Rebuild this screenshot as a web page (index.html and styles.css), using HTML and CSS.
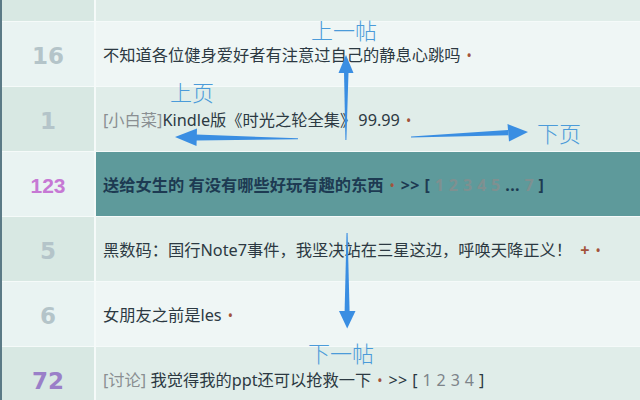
FILE: index.html
```html
<!DOCTYPE html>
<html lang="zh">
<head>
<meta charset="utf-8">
<title>论坛列表</title>
<link rel="stylesheet" href="styles.css">
</head>
<body>
<div class="board">
  <div class="row dark head">
    <div class="num"></div>
    <div class="title"></div>
  </div>
  <div class="row light">
    <div class="num grey">16</div>
    <div class="title">不知道各位健身爱好者有注意过自己的静息心跳吗<span class="dot">•</span></div>
  </div>
  <div class="row dark">
    <div class="num grey">1</div>
    <div class="title"><span class="tag">[小白菜]</span>Kindle版《时光之轮全集》<span class="price">99.99</span><span class="dot">•</span></div>
  </div>
  <div class="row light active">
    <div class="num pink small">123</div>
    <div class="title">送给女生的 有没有哪些好玩有趣的东西<span class="dot">•</span><span class="pages">&gt;&gt; [ <span class="pg">1 2 3 4 5</span> ... <span class="pg">7</span> ]</span></div>
  </div>
  <div class="row dark">
    <div class="num grey">5</div>
    <div class="title">黑数码：国行Note7事件，我坚决站在三星这边，呼唤天降正义！ <span class="plus">+</span><span class="dot">•</span></div>
  </div>
  <div class="row light">
    <div class="num grey">6</div>
    <div class="title">女朋友之前是les<span class="dot">•</span></div>
  </div>
  <div class="row dark">
    <div class="num purple">72</div>
    <div class="title"><span class="tag">[讨论]</span> 我觉得我的ppt还可以抢救一下<span class="dot">•</span><span class="pages">&gt;&gt; [ <span class="pg">1 2 3 4</span> ]</span></div>
  </div>

  <div class="overlay">
    <svg class="arrows" width="640" height="400" viewBox="0 0 640 400">
      <g fill="#3a8ee2">
        <polygon points="346,55 338.5,73 353.5,73"/>
        <polygon points="344,72 348.5,72 346.4,140 345.4,140"/>
        <polygon points="175,137 197,128.5 196.5,146"/>
        <polygon points="196,134.5 196,140.5 298,139.3 298,138.3"/>
        <polygon points="528,132 507.5,124 509,141.5"/>
        <polygon points="411,136.6 411,137.6 508.5,135.3 508,130"/>
        <polygon points="346.5,233 347.6,233 349.6,312 344.6,312"/>
        <polygon points="339,311 355.5,311 347.2,328.5"/>
      </g>
    </svg>
    <span class="label l-prev-post">上一帖</span>
    <span class="label l-prev-page">上页</span>
    <span class="label l-next-page">下页</span>
    <span class="label l-next-post">下一帖</span>
  </div>
</div>
</body>
</html>
```

FILE: styles.css
```css
html, body {
  margin: 0;
  padding: 0;
  width: 640px;
  height: 400px;
  overflow: hidden;
  background: #f3f8f7;
}

.board {
  position: relative;
  width: 638px;
  height: 400px;
  border-left: 2px solid #5b7a86;
  display: flex;
  flex-direction: column;
  gap: 1px;
  background: #f5faf9;
  font-family: "Noto Sans", "Noto Sans CJK SC", sans-serif;
}

.row {
  display: grid;
  grid-template-columns: 92px 1fr;
  column-gap: 2px;
  height: 64px;
  flex: none;
}

.row.head {
  height: 21px;
}

.dark .num { background: #d8e8e3; }
.dark .title { background: #e0ede9; }
.light .num { background: #e9f3f2; }
.light .title { background: #eff6f5; }

.num {
  display: flex;
  align-items: center;
  justify-content: center;
  font-family: "DejaVu Sans", sans-serif;
  font-weight: bold;
  font-size: 23px;
  padding-top: 4px;
}

.num.small {
  font-family: "Liberation Sans", Arial, sans-serif;
  font-size: 21px;
}

.grey { color: #b4c4c9; }
.pink { color: #c678d4; }
.purple { color: #9a7fc8; }

.title {
  padding-left: 7px;
  padding-top: 2px;
  font-size: 16.25px;
  line-height: 62px;
  color: #2c3942;
  white-space: nowrap;
  overflow: hidden;
}

.active .title {
  background: #5e9a9b;
  font-weight: bold;
  color: #1d3a52;
}

.tag { color: #8a8f92; }

.price { margin-left: 2px; }

.dot {
  color: #a3533a;
  font-size: 14px;
  font-weight: normal;
  margin: 0 6px 0 6px;
}

.plus {
  color: #a3533a;
  font-weight: bold;
  margin-left: 4px;
}

.pages {
  font-size: 16px;
  letter-spacing: 0.4px;
}

.pg { color: #7d8489; }
.active .pg { color: #7f9090; }

.overlay {
  position: absolute;
  left: -2px;
  top: 0;
  width: 640px;
  height: 400px;
  pointer-events: none;
}

.arrows {
  position: absolute;
  left: 0;
  top: 0;
}

.label {
  position: absolute;
  font-family: "Noto Sans CJK SC", sans-serif;
  font-weight: 300;
  font-size: 22px;
  line-height: 22px;
  color: #4b9bd9;
  white-space: nowrap;
}

.l-prev-post { left: 311px; top: 18px; }
.l-prev-page { left: 170px; top: 80px; }
.l-next-page { left: 537px; top: 121px; }
.l-next-post { left: 308px; top: 341px; }
```
